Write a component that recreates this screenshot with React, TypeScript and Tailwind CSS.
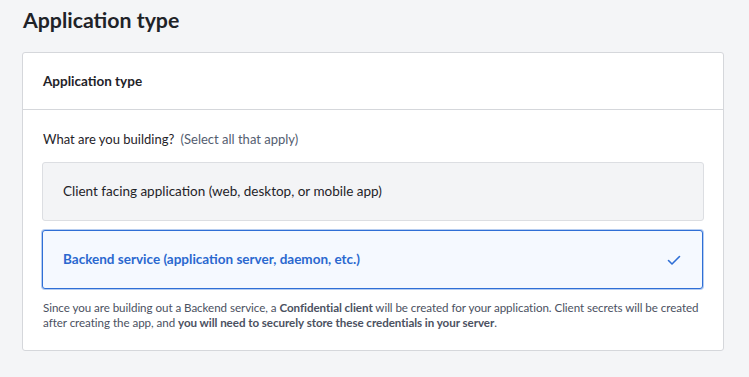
import React from 'react'

export default function App() {
  return (
    <div
      className="min-h-screen w-full bg-[#f4f5f7] px-[22px] pt-[4px] pb-6 text-[#1f2328]"
      style={{ fontFamily: 'Lato, "Noto Sans", sans-serif' }}
    >
      <h1 className="pl-px text-[21.3px] font-bold leading-[32px] text-[#1f2328]">Application type</h1>

      <div className="mt-[16px] w-[702px] rounded-[3px] border border-[#d5d7db] bg-white">
        <div className="flex h-[57px] items-center border-b border-[#d5d7db] px-5">
          <h2 className="text-[13.5px] font-bold text-[#1f2328]">Application type</h2>
        </div>

        <div className="pl-[19px] pr-5 pt-[19px] pb-[20px]">
          <p className="pl-px text-[13px] leading-[20px] text-[#1f2328]">
            What are you building?{' '}
            <span className="ml-[3px] text-[#545d70]">(Select all that apply)</span>
          </p>

          <div className="mt-[13px] flex flex-col gap-[9px]">
            <button className="flex h-[59px] w-[662px] items-center rounded-[3px] border border-[#dcdee2] bg-[#f3f4f6] px-5 text-left text-[13.5px] text-[#1f2328]">
              Client facing application (web, desktop, or mobile app)
            </button>

            <button className="flex h-[59px] w-[661px] items-center justify-between rounded-[3px] border border-[#2f6fd6] bg-[#f5f9ff] pl-5 pr-[20px] text-left text-[13.5px] font-bold text-[#2a68cf] shadow-[0_0_0_1px_rgba(47,111,214,0.35)]">
              <span>Backend service (application server, daemon, etc.)</span>
              <svg width="16" height="16" viewBox="0 0 16 16" fill="none" className="text-[#2f6fd6]">
                <path d="M2.5 8.5l3.5 3.5 7.5-7.5" stroke="currentColor" strokeWidth="1.6" strokeLinecap="round" strokeLinejoin="round" />
              </svg>
            </button>
          </div>

          <p className="mt-[11px] pl-px text-[11.6px] leading-[15px] tracking-[-0.05px] text-[#4b5161]">
            Since you are building out a Backend service, a <strong className="font-bold">Confidential client</strong> will be
            created for your application. Client secrets will be created after creating the app, and{' '}
            <strong className="font-bold">you will need to securely store these credentials in your server</strong>.
          </p>
        </div>
      </div>
    </div>
  )
}
